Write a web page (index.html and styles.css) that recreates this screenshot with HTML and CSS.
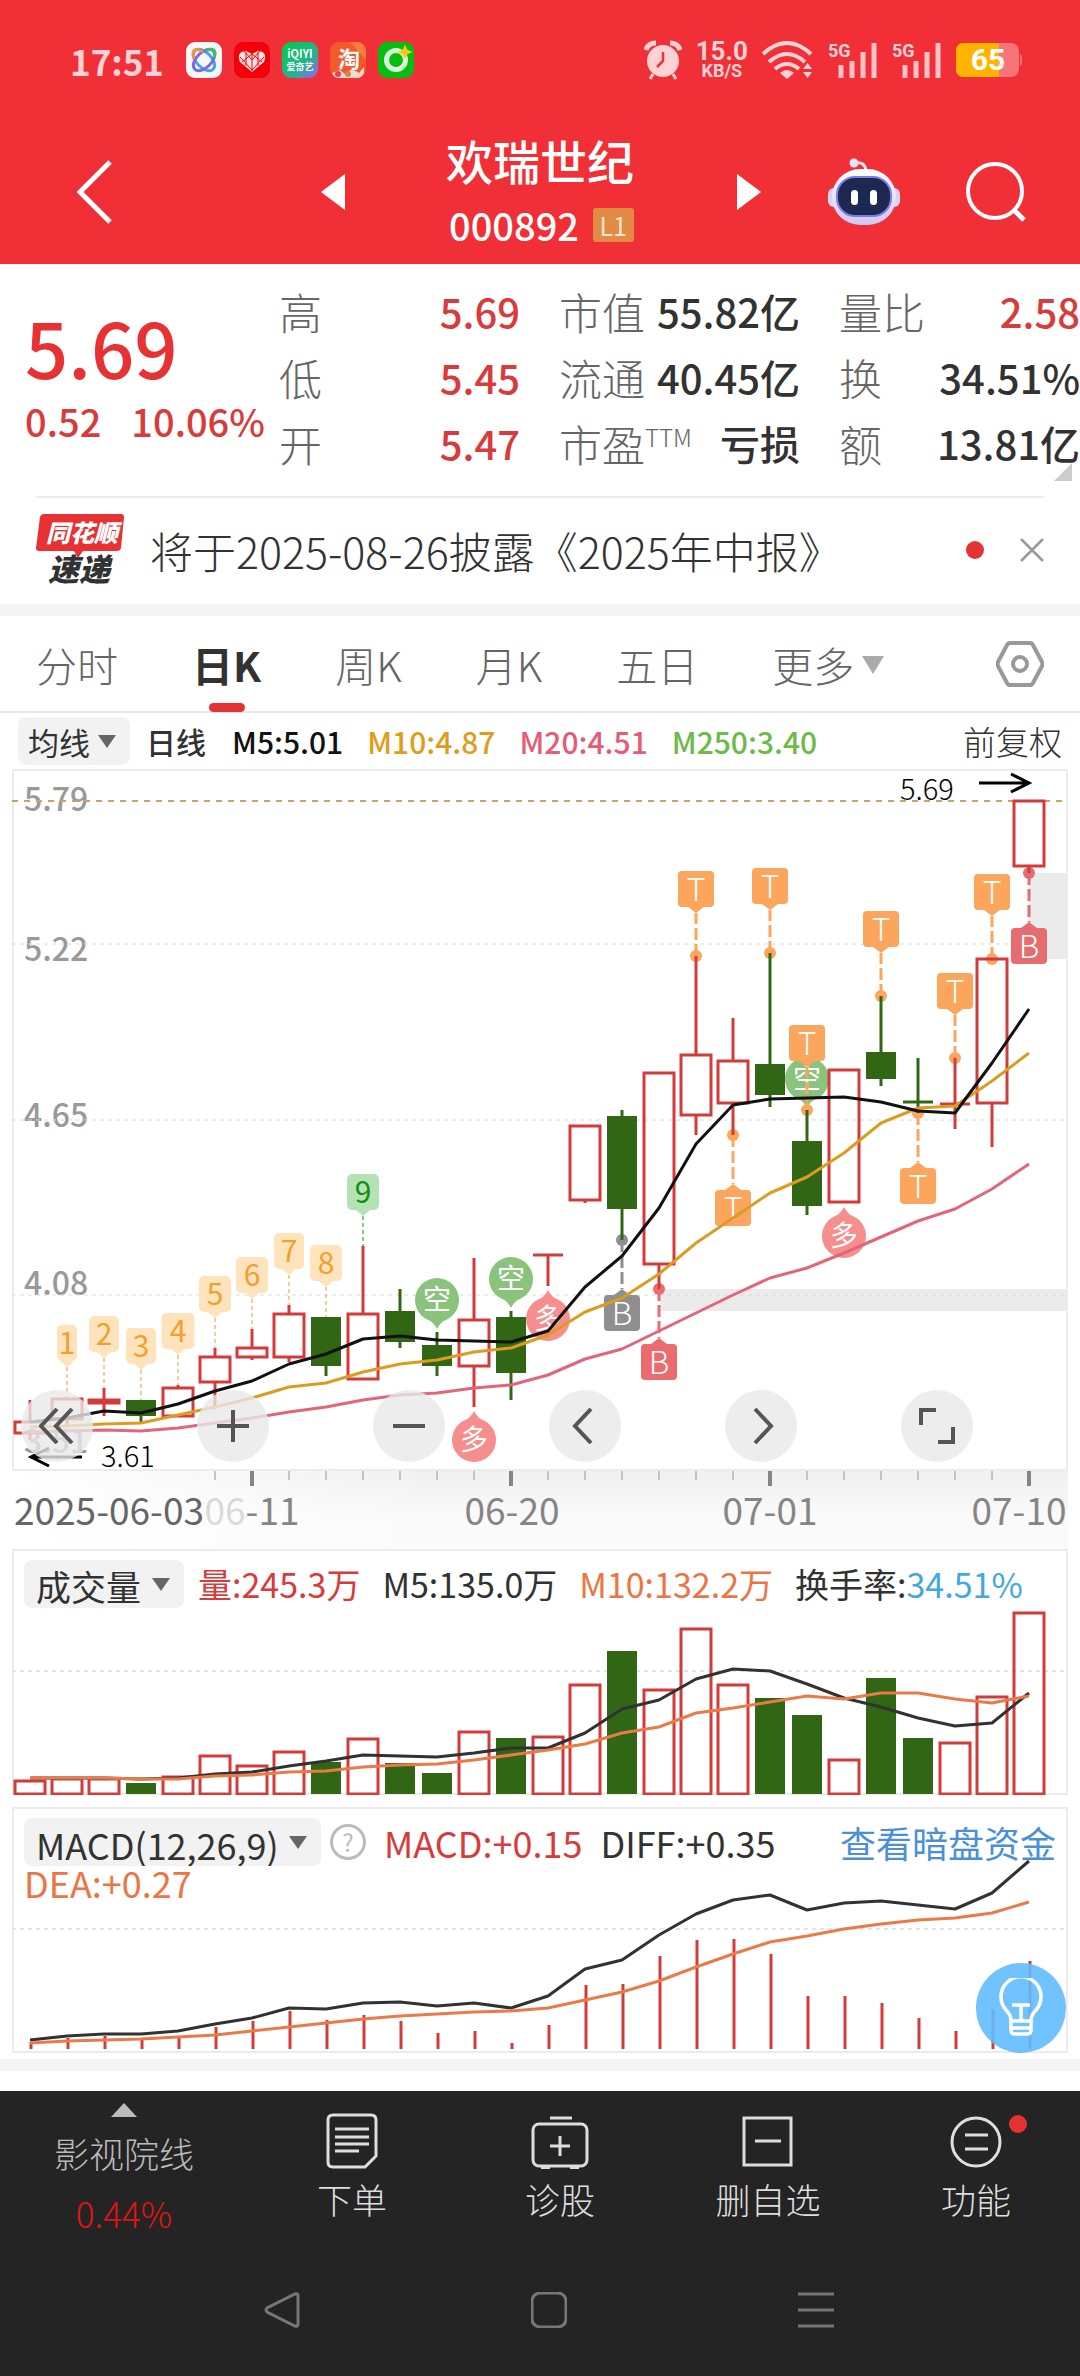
FILE: index.html
```html
<!DOCTYPE html>
<html lang="zh-CN">
<head>
  <meta charset="utf-8">
  <title>欢瑞世纪 000892</title>
  <meta name="viewport" content="width=device-width, initial-scale=1">
  <link rel="stylesheet" href="styles.css">
</head>
<body>

  <header class="top">
    <!-- Status bar -->
    <div class="status">
      <span class="clock">17:51</span>
      <div class="apps">
        <svg width="36" height="36" viewBox="0 0 36 36">
          <rect width="36" height="36" rx="9" fill="#f7f7f7"/>
          <g fill="none" stroke-width="3">
            <ellipse cx="18" cy="18" rx="13" ry="7.5" transform="rotate(45 18 18)" stroke="#3fa9e8"/>
            <ellipse cx="18" cy="18" rx="13" ry="7.5" transform="rotate(-45 18 18)" stroke="#7a6ae0"/>
            <path d="M8 17C5 8 9 5 17 10" stroke="#f5953a"/>
            <path d="M20 9c7-4 11-1 8 7" stroke="#45bd6b"/>
          </g>
        </svg>
        <svg width="36" height="36" viewBox="0 0 36 36">
          <rect width="36" height="36" rx="9" fill="#f40009"/>
          <path d="M18 30L6 20c-3-7 0-11 6-11l6 3 6-3c6 0 9 4 6 11z" fill="#ffe4e4"/>
          <path d="M6 15l12 13 12-13M10 9l8 9 8-9M8 20l10-8 10 8M18 12v17M12 10v14M24 10v14" fill="none" stroke="#f40009" stroke-width="1"/>
        </svg>
        <svg width="36" height="36" viewBox="0 0 36 36">
          <defs>
            <linearGradient id="iq" x1="0" y1="0" x2="1" y2="1">
              <stop offset="0" stop-color="#00cc4c"/>
              <stop offset=".6" stop-color="#21b58b"/>
              <stop offset="1" stop-color="#a05cff"/>
            </linearGradient>
          </defs>
          <rect width="36" height="36" rx="9" fill="url(#iq)"/>
          <text x="18" y="16" class="app-text app-latin">iQIYI</text>
          <text x="18" y="28" class="app-text app-small">爱奇艺</text>
        </svg>
        <svg width="36" height="36" viewBox="0 0 36 36">
          <rect width="36" height="36" rx="9" fill="#f4592b"/>
          <path d="M20 0h7a9 9 0 0 1 9 9v9z" fill="#fb7d3c"/>
          <path d="M2 31l8-3 5 4 7-5 7 4 5-6v6q-2 5-7 5H9q-5 0-7-5z" fill="#f7d9c8"/>
          <circle cx="8" cy="32" r="3" fill="#e8415a"/>
          <circle cx="18" cy="32" r="3" fill="#c98a5a"/>
          <text x="19" y="25" class="app-text app-large">淘</text>
        </svg>
        <svg width="36" height="36" viewBox="0 0 36 36">
          <rect width="36" height="36" rx="9" fill="#06bd10"/>
          <circle cx="18" cy="18" r="9.5" fill="none" stroke="#d9f7dc" stroke-width="5"/>
          <path d="M27 5l1.500 3.500L32 10l-3.500 1.500L27 15l-1.500-3.500L22 10l3.500-1.500z" fill="#ffc61a" stroke="#ffc61a" stroke-width="2"/>
        </svg>
      </div>
      <div class="signals">
        <svg width="38" height="40" viewBox="0 0 38 40">
          <circle cx="19" cy="21" r="16" fill="#fdd2d4"/>
          <path d="M2 10Q4 3 12 3M36 10Q34 3 26 3" fill="none" stroke="#fdd2d4" stroke-width="5"/>
          <path d="M9 34l-3 5M29 34l3 5" stroke="#fdd2d4" stroke-width="3"/>
          <path d="M19 12v9l-6 6" fill="none" stroke="#f12f36" stroke-width="2.500"/>
        </svg>
        <div class="speed"><b>15.0</b><small>KB/S</small></div>
        <svg width="52" height="38" viewBox="0 0 52 38">
          <g fill="none" stroke="#fdd2d4" stroke-width="4">
            <path d="M1 13q24-22 48 0"/>
            <path d="M7 21q18-16 36 0"/>
            <path d="M13 28q12-10 24 0"/>
          </g>
          <path d="M18 32q7-6 14 0l-7 6z" fill="#fdd2d4"/>
          <path d="M41 28l4.500-6 4.500 6zM41 31l4.500 6 4.500-6z" fill="#fdd2d4"/>
        </svg>
        <svg width="50" height="38" viewBox="0 0 50 38">
          <text x="0" y="16" class="net">5G</text>
          <path d="M13 24v13M24 20v17M35 11v26M46 2v35" stroke="#fdc4c7" stroke-width="5"/>
        </svg>
        <svg width="50" height="38" viewBox="0 0 50 38">
          <text x="0" y="16" class="net">5G</text>
          <path d="M13 24v13M24 20v17M35 11v26M46 2v35" stroke="#fdc4c7" stroke-width="5"/>
        </svg>
        <svg width="66" height="34" viewBox="0 0 66 34">
          <rect width="63" height="34" rx="8" fill="#f6747a"/>
          <path d="M8 0h35v34H8q-8 0-8-8V8q0-8 8-8z" fill="#ffb400"/>
          <path d="M64 11q2 1 2 6t-2 6z" fill="#f6747a"/>
          <text x="32" y="27" class="battery">65</text>
        </svg>
      </div>
    </div>

    <!-- Title bar -->
    <div class="titlebar">
      <div class="side left">
        <button aria-label="返回">
          <svg width="36" height="64" viewBox="0 0 36 64"><path d="M33 2L3 32l30 30" fill="none" stroke="#fff" stroke-width="5"/></svg>
        </button>
        <button aria-label="上一只">
          <svg width="24" height="36" viewBox="0 0 24 36"><path d="M24 0v36L0 18z" fill="#fff"/></svg>
        </button>
      </div>
      <div class="stock">
        <h1>欢瑞世纪</h1>
        <div class="code"><span>000892</span><span class="level">L1</span></div>
      </div>
      <div class="side right">
        <button aria-label="下一只">
          <svg width="24" height="36" viewBox="0 0 24 36"><path d="M0 0v36l24-18z" fill="#fff"/></svg>
        </button>
        <button aria-label="智能助手">
          <svg width="72" height="68" viewBox="0 0 72 68">
            <defs>
              <linearGradient id="shell" x1="0" y1="0" x2="0" y2="1">
                <stop offset="0" stop-color="#fff"/>
                <stop offset="1" stop-color="#cfc8f2"/>
              </linearGradient>
            </defs>
            <circle cx="26" cy="5" r="4.500" fill="#e8e4fa"/>
            <path d="M27 5q10-2 11 8" fill="none" stroke="#e8e4fa" stroke-width="3"/>
            <rect x="0" y="30" width="72" height="19" rx="6" fill="#d9d4f5"/>
            <rect x="4" y="11" width="64" height="56" rx="28" fill="url(#shell)"/>
            <rect x="9" y="19" width="54" height="39" rx="18" fill="#1d2950" stroke="#7f7be8" stroke-width="2"/>
            <rect x="23" y="32" width="7" height="15" rx="3.500" fill="#fff"/>
            <rect x="42" y="32" width="7" height="15" rx="3.500" fill="#fff"/>
          </svg>
        </button>
        <button aria-label="搜索">
          <svg width="60" height="60" viewBox="0 0 60 60" fill="none" stroke="#fff" stroke-width="4">
            <circle cx="29" cy="29" r="27"/><path d="M48 48l10 10" stroke-width="5"/>
          </svg>
        </button>
      </div>
    </div>
  </header>

  <main>
    <!-- Quote -->
    <section class="quote">
      <div class="price">
        <div class="last">5.69</div>
        <div class="change"><span>0.52</span><span>10.06%</span></div>
      </div>
      <dl>
        <div><dt>高</dt><dd class="up">5.69</dd></div>
        <div><dt>低</dt><dd class="up">5.45</dd></div>
        <div><dt>开</dt><dd class="up">5.47</dd></div>
      </dl>
      <dl>
        <div><dt>市值</dt><dd>55.82亿</dd></div>
        <div><dt>流通</dt><dd>40.45亿</dd></div>
        <div><dt>市盈<sup>TTM</sup></dt><dd>亏损</dd></div>
      </dl>
      <dl>
        <div><dt>量比</dt><dd class="up">2.58</dd></div>
        <div><dt>换</dt><dd>34.51%</dd></div>
        <div><dt>额</dt><dd>13.81亿</dd></div>
      </dl>
      <span class="corner"></span>
    </section>

    <!-- News -->
    <section class="news">
      <svg width="88" height="76" viewBox="0 0 88 76">
        <path d="M9 2h76q3 0 3 3l-3 31q-1 3-4 3H47l-5 7-4-7H3q-3 0-3-3L4 5q1-3 4-3z" fill="#e63232"/>
        <text x="46" y="30" class="logo-top">同花顺</text>
        <text x="43" y="69" class="logo-bottom">速递</text>
      </svg>
      <a href="#">将于2025-08-26披露《2025年中报》</a>
      <span class="dot"></span>
      <button aria-label="关闭">
        <svg width="24" height="24" viewBox="0 0 24 24"><path d="M1 1l22 22M23 1L1 23" stroke="#999" stroke-width="2.500"/></svg>
      </button>
    </section>

    <!-- Period tabs -->
    <nav class="tabs">
      <button>分时</button>
      <button class="active">日K</button>
      <button>周K</button>
      <button>月K</button>
      <button>五日</button>
      <button class="more">更多</button>
      <button class="setting" aria-label="设置">
        <svg width="48" height="46" viewBox="0 0 48 46" fill="none" stroke="#999" stroke-width="4">
          <path d="M14 2h20q2 0 3 2l9 17q1 2 0 4l-9 17q-1 2-3 2H14q-2 0-3-2L2 25q-1-2 0-4l9-17q1-2 3-2z"/><circle cx="24" cy="23" r="7"/>
        </svg>
      </button>
    </nav>

    <!-- K line -->
    <div class="ma-row">
      <label class="drop"><select aria-label="均线"><option>均线</option></select></label>
      <b>日线</b>
      <span class="ma5">M5:5.01</span>
      <span class="ma10">M10:4.87</span>
      <span class="ma20">M20:4.51</span>
      <span class="ma250">M250:3.40</span>
      <span class="fq">前复权</span>
    </div>
    <div class="kline">
      <svg id="kline" class="chart" viewBox="0 0 1080 780"></svg>
      <div class="tools">
        <button aria-label="最早"><svg viewBox="0 0 36 36"><path d="M18 1L2 18l16 17M33 1L17 18l16 17"/></svg></button>
        <button aria-label="放大"><svg viewBox="0 0 36 36"><path d="M2 18h32M18 2v32"/></svg></button>
        <button aria-label="缩小"><svg viewBox="0 0 36 36"><path d="M2 18h32"/></svg></button>
        <button aria-label="左移"><svg viewBox="0 0 36 36"><path d="M24 1L8 18l16 17"/></svg></button>
        <button aria-label="右移"><svg viewBox="0 0 36 36"><path d="M12 1l16 17-16 17"/></svg></button>
        <button aria-label="全屏"><svg viewBox="0 0 36 36"><path d="M2 17V2h15M19 34h15V19"/></svg></button>
      </div>
    </div>

    <!-- Volume -->
    <div class="panel">
      <svg id="volume" class="chart" viewBox="0 0 1080 246"></svg>
      <div class="legend vol">
        <label class="drop"><select aria-label="指标"><option>成交量</option></select></label>
        <span class="up">量:245.3万</span>
        <span>M5:135.0万</span>
        <span class="orange">M10:132.2万</span>
        <span>换手率:<span class="blue">34.51%</span></span>
      </div>
    </div>

    <!-- MACD -->
    <div class="panel">
      <svg id="macd" class="chart" viewBox="0 0 1080 246"></svg>
      <div class="legend macd">
        <label class="drop"><select aria-label="指标"><option>MACD(12,26,9)</option></select></label>
        <button class="help" aria-label="说明">?</button>
        <span class="up">MACD:+0.15</span>
        <span>DIFF:+0.35</span>
        <a href="#">查看暗盘资金</a>
        <span class="orange dea">DEA:+0.27</span>
      </div>
      <button class="tip" aria-label="提示">
        <svg width="44" height="60" viewBox="0 0 44 60" fill="none" stroke="#fff" stroke-width="3.500">
          <path d="M12 43q0-6-5-11a20 20 0 1 1 30 0q-5 5-5 11z"/>
          <path d="M13 27h18M22 27v16M12 43v9q0 4 4 4h12q4 0 4-4v-9M12 50h20"/>
        </svg>
      </button>
    </div>
  </main>

  <footer>
    <nav class="bottom">
      <a class="sector" href="#">
        <span class="caret"></span>
        <span>影视院线</span>
        <span class="pct">0.44%</span>
      </a>
      <a href="#">
        <svg width="56" height="56" viewBox="0 0 56 56">
          <path d="M9 2h38q5 0 5 5v36L41 54H9q-5 0-5-5V7q0-5 5-5zM11 16h34M11 24h34M11 31h34M11 38h24"/>
        </svg>
        下单
      </a>
      <a href="#">
        <svg width="58" height="56" viewBox="0 0 58 56">
          <rect x="2" y="11" width="54" height="42" rx="6"/><path d="M19 5h22M29 23v20M19 33h20M10 55h9M39 55h9"/>
        </svg>
        诊股
      </a>
      <a href="#">
        <svg width="56" height="56" viewBox="0 0 56 56">
          <rect x="4" y="5" width="47" height="47"/><path d="M15 28h26"/>
        </svg>
        删自选
      </a>
      <a class="has-dot" href="#">
        <svg width="56" height="56" viewBox="0 0 56 56">
          <circle cx="28" cy="29" r="24"/><path d="M17 22h23M17 36h23"/>
        </svg>
        功能
      </a>
    </nav>
    <div class="system">
      <button aria-label="返回"><svg width="36" height="36" viewBox="0 0 36 36"><path d="M31 2q3-1 3 2v28q0 3-3 2L3 20q-2-2 0-4z"/></svg></button>
      <button aria-label="主页"><svg width="36" height="36" viewBox="0 0 36 36"><rect x="1" y="1" width="34" height="34" rx="8"/></svg></button>
      <button aria-label="任务"><svg width="36" height="36" viewBox="0 0 36 36"><path d="M0 2h36M0 18h36M0 34h36"/></svg></button>
    </div>
  </footer>

  <script src="chart.js"></script>
</body>
</html>
```
FILE: styles.css
```css
* {
  box-sizing: border-box;
}

body {
  margin: 0;
  display: flex;
  flex-direction: column;
  min-height: 100vh;
  font-family: "Noto Sans CJK SC", Roboto, sans-serif;
  background-color: #fff;
  color: #323232;
  white-space: nowrap;
}

button, select {
  margin: 0;
  padding: 0;
  border: none;
  background: none;
  font-family: inherit;
  color: inherit;
}

a {
  color: inherit;
  text-decoration: none;
}

svg {
  display: block;
}

.up { color: #d93a3a; }
.orange { color: #ed7443; }
.blue { color: #43a8e0; }

/* header */
.top {
  background-color: #f12f36;
  color: #fff;
}

.status {
  display: flex;
  align-items: center;
  height: 120px;
  padding: 0 58px 0 70px;
}

.clock {
  width: 116px;
  font-size: 35px;
  font-weight: bold;
  color: #fdd2d4;
}

.apps {
  display: flex;
  gap: 12px;
}

.app-text {
  fill: #fff;
  font-weight: bold;
  text-anchor: middle;
}

.app-latin { font-size: 11px; }
.app-small { font-size: 9px; }
.app-large { font-size: 22px; }

.signals {
  display: flex;
  align-items: center;
  gap: 14px;
  margin-left: auto;
}

.speed {
  display: flex;
  flex-direction: column;
  align-items: center;
  color: #fdd2d4;
  font-family: Roboto, sans-serif;
}

.speed b {
  font-size: 26px;
  line-height: 22px;
}

.speed small {
  font-size: 18px;
  font-weight: bold;
  line-height: 18px;
}

.net {
  fill: #fdd2d4;
  font: bold 18px Roboto, sans-serif;
}

.battery {
  fill: #fff;
  font: bold 30px Roboto, sans-serif;
  text-anchor: middle;
}

.titlebar {
  display: grid;
  grid-template-columns: 1fr auto 1fr;
  align-items: center;
  height: 144px;
}

.side {
  display: flex;
  align-items: center;
  justify-content: space-between;
}

.left { padding: 0 101px 0 77px; }
.right { padding: 0 54px 0 103px; }

.stock {
  text-align: center;
}

.stock h1 {
  margin: 0;
  font-size: 47px;
  font-weight: 500;
  line-height: 66px;
}

.code {
  display: flex;
  align-items: center;
  justify-content: space-between;
  padding-left: 3px;
  font-size: 38px;
  font-weight: 500;
  line-height: 64px;
}

.level {
  padding: 0 7px;
  border-radius: 3px;
  background-color: #e28b45;
  font-size: 25px;
  font-weight: normal;
  line-height: 34px;
  color: #fbe6d2;
}

/* quote */
.quote {
  position: relative;
  display: grid;
  grid-template-columns: 215px 1fr 1fr 1fr;
  column-gap: 39px;
  margin: 0 0 0 25px;
  padding: 14px 0 20px;
}

.last {
  margin-top: 18px;
  font-size: 76px;
  font-weight: 500;
  line-height: 100px;
  color: #e63232;
}

.change {
  display: flex;
  gap: 30px;
  font-size: 38px;
  font-weight: 500;
  line-height: 50px;
  color: #d93a3a;
}

dl {
  margin: 0;
}

dl div {
  display: flex;
  justify-content: space-between;
  line-height: 66px;
}

dt {
  font-size: 43px;
  font-weight: 300;
  color: #666;
}

dt sup {
  font-size: 24px;
  line-height: 0;
}

dd {
  margin: 0;
  font-size: 40px;
  font-weight: 500;
}

.corner {
  position: absolute;
  right: 8px;
  bottom: 15px;
  border-left: 18px solid transparent;
  border-bottom: 18px solid #ccc;
}

/* news */
.news {
  position: relative;
  display: flex;
  align-items: center;
  height: 120px;
  padding: 0 36px;
  border-bottom: 12px solid #f4f4f4;
}

.news::before {
  content: "";
  position: absolute;
  top: 0;
  left: 36px;
  right: 36px;
  border-top: 2px solid #ececec;
}

.news a {
  flex: 1;
  margin-left: 26px;
  font-size: 43px;
  font-weight: 300;
  line-height: 60px;
}

.logo-top, .logo-bottom {
  font-weight: 900;
  font-style: italic;
  text-anchor: middle;
}

.logo-top {
  fill: #fff;
  font-size: 24px;
}

.logo-bottom {
  fill: #323232;
  font-size: 31px;
}

.dot {
  width: 18px;
  height: 18px;
  margin-right: 36px;
  border-radius: 50%;
  background-color: #e63232;
}

/* tabs */
.tabs {
  display: flex;
  align-items: center;
  gap: 74px;
  height: 97px;
  padding: 0 36px;
  border-bottom: 2px solid #e8e8e8;
}

.tabs button {
  position: relative;
  font-size: 41px;
  font-weight: 300;
  line-height: 96px;
  color: #666;
}

.tabs .active {
  font-weight: bold;
  color: #323232;
}

.tabs .active::after {
  content: "";
  position: absolute;
  left: 50%;
  bottom: 0;
  width: 36px;
  height: 9px;
  margin-left: -18px;
  border-radius: 5px;
  background-color: #e63232;
}

.more::after {
  content: "";
  display: inline-block;
  margin-left: 8px;
  vertical-align: 8px;
  border: 11px solid transparent;
  border-top: 18px solid #aaa;
  border-bottom: 0;
}

.tabs .setting {
  margin-left: auto;
}

/* drop-down chips */
.drop {
  position: relative;
  display: block;
}

.drop select {
  display: block;
  appearance: none;
  height: 48px;
  padding: 0 42px 0 12px;
  border-radius: 8px;
  background-color: #f2f2f2;
  font-size: inherit;
  color: #323232;
}

.drop::after {
  content: "";
  position: absolute;
  top: 18px;
  right: 14px;
  border: 9px solid transparent;
  border-top: 13px solid #666;
  border-bottom: 0;
  pointer-events: none;
}

.ma-row {
  display: flex;
  align-items: center;
  height: 56px;
  padding: 0 18px;
  font-size: 30px;
  font-weight: 500;
}

.ma-row .drop {
  font-size: 31px;
}

.ma-row .drop select {
  padding: 0 40px 0 10px;
}

.ma-row b {
  margin: 0 26px 0 16px;
  font-weight: 500;
}

.ma-row span {
  margin-right: 24px;
}

.ma5 { color: #111; }
.ma10 { color: #e09d1c; }
.ma20 { color: #e55c74; }
.ma250 { color: #6cbb4a; }

.ma-row .fq {
  margin: 0 0 0 auto;
  font-size: 33px;
  font-weight: 300;
}

/* charts */
.kline {
  position: relative;
}

.chart {
  width: 100%;
  height: auto;
}

.chart text {
  text-anchor: middle;
}

.chart .axis {
  fill: #999;
  font-size: 32px;
  font-weight: 500;
  text-anchor: start;
}

.chart .date {
  fill: #858585;
  font-size: 37px;
}

.chart .date.first {
  fill: #666;
}

.chart .extreme {
  fill: #000;
  font-size: 29px;
  font-weight: 300;
}

.chart .tag {
  fill: #fff;
  font-size: 32px;
  font-weight: 300;
}

.chart .num {
  font-size: 30px;
}

.chart .pin {
  fill: #fff;
  font-size: 28px;
}

.tools {
  position: absolute;
  left: 21px;
  right: 107px;
  bottom: 87px;
  display: flex;
  justify-content: space-between;
}

.tools button {
  width: 72px;
  height: 72px;
  padding: 18px;
  border-radius: 50%;
  background-color: rgba(232, 232, 232, 0.8);
}

.tools svg {
  fill: none;
  stroke: #555;
  stroke-width: 4;
}

.panel {
  display: grid;
  margin-bottom: 12px;
}

.panel > * {
  grid-area: 1 / 1;
}

.panel + .panel {
  margin-bottom: 6px;
}

.legend {
  display: flex;
  flex-wrap: wrap;
  align-items: center;
  align-self: start;
  padding: 11px 24px 0;
  font-size: 34px;
  line-height: 48px;
}

.vol {
  column-gap: 22px;
}

.vol .drop {
  margin-right: -8px;
  font-size: 35px;
}

.macd {
  column-gap: 18px;
  font-size: 36px;
}

.macd .drop {
  margin-right: -9px;
}

.macd a {
  margin-left: auto;
  color: #4a8fd8;
}

.dea {
  width: 100%;
  line-height: 32px;
}

.help {
  width: 36px;
  height: 36px;
  border: 3px solid #bbb;
  border-radius: 50%;
  font-size: 24px;
  line-height: 28px;
  color: #bbb;
}

.tip {
  display: grid;
  place-items: center;
  align-self: end;
  justify-self: end;
  width: 90px;
  height: 90px;
  margin-right: 14px;
  border-radius: 50%;
  background-color: rgba(96, 189, 255, 0.9);
}

main {
  border-bottom: 12px solid #f4f4f4;
}

/* footer */
footer {
  flex: 1;
  margin-top: 20px;
  background-color: #242424;
  color: #dedede;
}

.bottom {
  display: grid;
  grid-template-columns: 248fr 208fr 208fr 208fr 208fr;
  height: 160px;
  font-size: 35px;
  font-weight: 300;
}

.bottom a {
  display: flex;
  flex-direction: column;
  align-items: center;
  padding-top: 22px;
  line-height: 60px;
}

.bottom svg {
  fill: none;
  stroke: #dedede;
  stroke-width: 3;
}

.bottom .sector {
  padding-top: 12px;
  color: #bbb;
}

.caret {
  margin-bottom: 6px;
  border: 13px solid transparent;
  border-top: 0;
  border-bottom: 14px solid #bbb;
}

.bottom .pct {
  color: #e01414;
}

.has-dot {
  position: relative;
}

.has-dot::after {
  content: "";
  position: absolute;
  top: 24px;
  left: 50%;
  width: 18px;
  height: 18px;
  margin-left: 33px;
  border-radius: 50%;
  background-color: #e63232;
}

.system {
  display: grid;
  grid-template-columns: repeat(3, 267px);
  justify-content: center;
  justify-items: center;
  padding: 41px 0 41px 18px;
}

.system svg {
  fill: none;
  stroke: #777;
  stroke-width: 3;
}
```
FILE: chart.js
```js
const RED = '#d33a3a';
const GREEN = '#306614';
const STEP = 37;
const X0 = 30;
const cx = i => X0 + i * STEP;

// colour, high, body top, body bottom, low
const candles = [
  ['r', 631, 653, 664, 671], ['r', 628, 630, 650, 657], ['r', 619, 631, 634, 647], ['g', 631, 631, 647, 653],
  ['r', 616, 619, 647, 647], ['r', 579, 588, 613, 640], ['r', 560, 579, 588, 591], ['r', 536, 545, 588, 593],
  ['g', 548, 548, 597, 607], ['r', 477, 545, 610, 610], ['g', 520, 542, 573, 579], ['g', 563, 576, 597, 607],
  ['r', 489, 551, 597, 638], ['g', 542, 548, 604, 631], ['r', 486, 486, 486, 517], ['r', 357, 357, 431, 434],
  ['g', 341, 347, 440, 471], ['r', 304, 304, 495, 520], ['r', 187, 286, 346, 366], ['r', 249, 292, 334, 366],
  ['g', 184, 295, 326, 338], ['g', 341, 372, 437, 446], ['r', 301, 301, 433, 433], ['g', 227, 283, 310, 317],
  ['g', 289, 333, 333, 344], ['r', 289, 335, 335, 360], ['r', 190, 190, 334, 378], ['r', 32, 32, 97, 104]
];
const ma5 = [653, 649, 642, 644, 635, 622, 612, 595, 585, 570, 567, 571, 572, 573, 562, 518, 487, 439, 375, 336, 330, 329, 328, 333, 342, 344, 294, 240];
const ma10 = [658, 657, 655, 654, 646, 638, 629, 618, 614, 603, 595, 591, 583, 579, 566, 543, 529, 505, 474, 449, 424, 408, 384, 354, 339, 337, 312, 284];
const ma20 = [663, 662, 661, 662, 659, 654, 649, 643, 638, 631, 626, 624, 619, 616, 606, 590, 580, 562, 544, 526, 509, 499, 484, 468, 452, 440, 420, 395];

const volume = [232, 230, 230, 234, 228, 207, 217, 203, 213, 190, 214, 224, 183, 189, 188, 136, 102, 141, 80, 136, 149, 166, 211, 129, 189, 194, 148, 64];
const vol5 = [229, 229, 229, 230, 229, 225, 223, 217, 212, 206, 207, 208, 204, 199, 199, 184, 160, 151, 130, 120, 122, 135, 149, 158, 169, 177, 174, 144];
const vol10 = [229, 229, 229, 230, 230, 227, 226, 223, 222, 218, 216, 215, 211, 206, 201, 195, 184, 178, 164, 159, 153, 147, 150, 144, 144, 150, 154, 147];

const diff = [233, 229, 227, 227, 224, 217, 211, 201, 202, 196, 195, 199, 196, 201, 189, 162, 153, 128, 107, 93, 88, 103, 96, 94, 98, 102, 86, 54];
const dea = [236, 234, 233, 232, 230, 228, 224, 220, 216, 212, 209, 207, 205, 204, 201, 193, 185, 174, 160, 147, 135, 129, 122, 117, 113, 111, 106, 95];
const bars = [235, 231, 229, 233, 231, 220, 214, 204, 213, 208, 214, 226, 224, 236, 218, 178, 177, 149, 133, 132, 147, 189, 189, 196, 211, 224, 202, 154];

function line(x1, y1, x2, y2, color, width, dash) {
  return `<line x1="${x1}" y1="${y1}" x2="${x2}" y2="${y2}" stroke="${color}" stroke-width="${width}" stroke-dasharray="${dash || 'none'}"/>`;
}

function curve(data, color, width) {
  const pts = data.map((y, i) => cx(i) + ',' + y).join(' ');
  return `<polyline points="${pts}" fill="none" stroke="${color}" stroke-width="${width}" stroke-linejoin="round"/>`;
}

function text(x, y, str, cls, fill) {
  return `<text x="${x}" y="${y}" class="${cls}"${fill ? ` style="fill:${fill}"` : ''}>${str}</text>`;
}

function frame(h) {
  return `<rect x="13" y="1" width="1054" height="${h - 2}" fill="none" stroke="#ececec" stroke-width="2"/>`;
}

function box(i, top, bottom, color) {
  const x = cx(i);
  // open equals close: a flat bar
  if (top === bottom) return line(x - 15, top, x + 15, top, color === 'g' ? GREEN : RED, 3);
  if (color === 'g') return `<rect x="${x - 15}" y="${top}" width="30" height="${bottom - top}" fill="${GREEN}"/>`;
  return `<rect x="${x - 15}" y="${top}" width="30" height="${bottom - top}" fill="none" stroke="${RED}" stroke-width="3"/>`;
}

function candle([color, high, top, bottom, low], i) {
  const c = color === 'g' ? GREEN : RED;
  return line(cx(i), high, cx(i), top, c, 3) + line(cx(i), bottom, cx(i), low, c, 3) + box(i, top, bottom, color);
}

// T / B tag, dotted to the price it marks; dir -1 sits above, 1 below
function tag(i, y, letter, dir, color) {
  const x = cx(i);
  const top = dir < 0 ? y - 85 : y + 55;
  const tip = dir < 0 ? top + 42 : top - 6;
  const base = dir < 0 ? top + 36 : top;
  return line(x, y, x, tip, color, 3, '12 4') +
    `<circle cx="${x}" cy="${y}" r="6" fill="${color}"/>` +
    `<rect x="${x - 18}" y="${top}" width="36" height="36" rx="4" fill="${color}"/>` +
    `<path d="M${x - 8} ${base}L${x} ${tip}L${x + 8} ${base}z" fill="${color}"/>` +
    text(x, top + 30, letter, 'tag');
}

// round long / short signal with a pointed tip
function pin(i, y, str) {
  const x = cx(i);
  const long = str === '多';
  const color = long ? '#f78e8e' : '#8ac47c';
  const tip = long ? y - 29 : y + 29;
  const base = long ? y - 16 : y + 16;
  return `<circle cx="${x}" cy="${y}" r="22" fill="${color}"/>` +
    `<path d="M${x - 13} ${base}Q${x - 3} ${(base + tip) / 2} ${x} ${tip}Q${x + 3} ${(base + tip) / 2} ${x + 13} ${base}z" fill="${color}"/>` +
    text(x, y + 10, str, 'pin');
}

function count(i, w) {
  const x = cx(i);
  const high = candles[i][1];
  const top = high - 72;
  const nine = i === 9;
  const bg = nine ? '#b4e2b4' : '#ffe3bd';
  return line(x, top + 42, x, high, nine ? '#149014' : '#dba23a', 1, '4 3') +
    `<rect x="${x - w / 2}" y="${top}" width="${w}" height="36" rx="5" fill="${bg}"/>` +
    `<path d="M${x - 7} ${top + 36}L${x} ${top + 42}L${x + 7} ${top + 36}z" fill="${bg}"/>` +
    text(x, top + 29, i, 'num', nine ? '#149014' : '#f0a02c');
}

function drawKline() {
  let s = `<defs>
    <linearGradient id="fade"><stop offset="0" stop-color="#fff"/><stop offset=".4" stop-color="#fff" stop-opacity="0"/></linearGradient>
    <linearGradient id="shade" x1="0" y1="0" x2="0" y2="1"><stop offset="0" stop-color="#f0f0f0"/><stop offset=".6" stop-color="#fafafa"/></linearGradient>
  </defs>`;
  s += '<rect x="12" y="702" width="1056" height="78" fill="url(#shade)"/><rect x="12" y="702" width="1056" height="78" fill="url(#fade)"/>';
  s += frame(702);
  s += '<rect x="660" y="520" width="407" height="22" fill="#ebebeb"/><rect x="1029" y="104" width="38" height="86" fill="#ebebeb"/>';

  [['5.79', 42], ['5.22', 192], ['4.65', 358], ['4.08', 526], ['3.51', 684]].forEach(([t, y]) => s += text(24, y, t, 'axis'));
  s += line(12, 32, 1067, 32, '#c9a26a', 2, '6 6');
  [175, 351, 526].forEach(y => s += line(12, y, 1067, y, '#dcdcdc', 1, '4 4'));

  [20, 30, 30, 33, 32, 32, 30, 32, 32].forEach((w, k) => s += count(k + 1, w));
  [[11, 531, '空'], [13, 510, '空'], [21, 310, '空'], [12, 671, '多'], [14, 550, '多'], [22, 467, '多']].forEach(p => s += pin(...p));
  [18, 20, 21, 23, 25, 26].forEach(i => s += tag(i, candles[i][1], 'T', -1, '#fba65c'));
  [19, 24].forEach(i => s += tag(i, candles[i][4], 'T', 1, '#fba65c'));
  s += tag(16, 471, 'B', 1, '#8f8f8f') + tag(17, 520, 'B', 1, '#ec6b6e') + tag(27, 104, 'B', 1, '#e56c70');

  candles.forEach((c, i) => s += candle(c, i));
  s += curve(ma20, '#e2667a', 3) + curve(ma10, '#dc9c22', 3) + curve(ma5, '#111', 3);

  s += text(927, 31, '5.69', 'extreme') + text(128, 698, '3.61', 'extreme');
  s += '<path d="M979 14h50M1011 5l18 9-18 9M82 688H31M49 679l-18 9 18 9" fill="none" stroke="#000" stroke-width="3"/>';

  for (let i = 5; i < 28; i++) {
    const major = (i - 6) % 7 === 0;
    s += line(cx(i), 702, cx(i), major ? 717 : 711, major ? '#858585' : '#c4c4c4', major ? 4 : 2);
  }
  s += text(252, 756, '<tspan fill-opacity=".3">06</tspan>-11', 'date') + text(512, 756, '06-20', 'date');
  s += text(770, 756, '07-01', 'date') + text(1019, 756, '07-10', 'date') + text(109, 756, '2025-06-03', 'date first');
  document.getElementById('kline').innerHTML = s;
}

function drawVolume() {
  let s = frame(246) + line(12, 122, 1067, 122, '#e4e4e4', 2, '4 4');
  volume.forEach((y, i) => s += box(i, y, 245, candles[i][0]));
  s += curve(vol5, '#323232', 3) + curve(vol10, '#ea7a48', 3);
  document.getElementById('volume').innerHTML = s;
}

function drawMacd() {
  let s = frame(246) + line(12, 122, 1067, 122, '#e4e4e4', 2, '4 4');
  bars.forEach((y, i) => s += line(cx(i) + 1, y, cx(i) + 1, 242, RED, 3));
  s += curve(diff, '#323232', 3) + curve(dea, '#ea7a48', 3);
  document.getElementById('macd').innerHTML = s;
}

drawKline();
drawVolume();
drawMacd();
```
